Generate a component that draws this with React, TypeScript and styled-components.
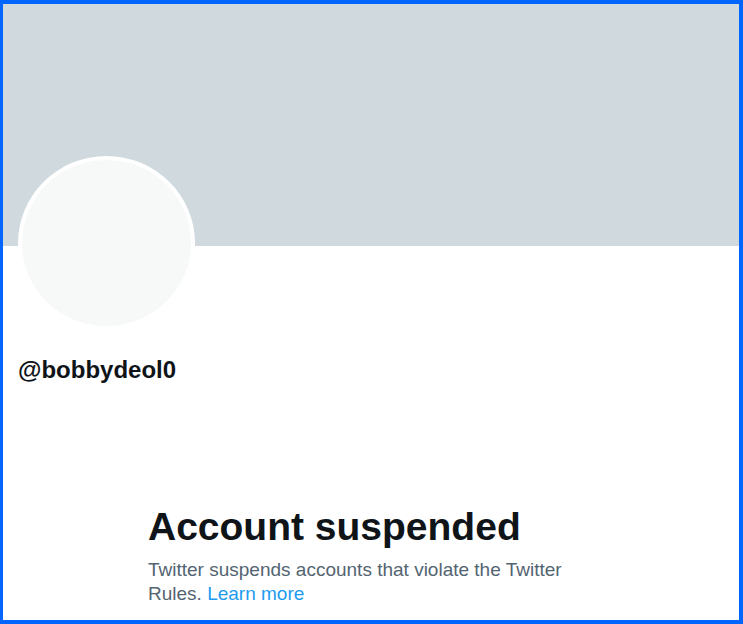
import styled, { createGlobalStyle } from "styled-components"

const Global = createGlobalStyle`
  html, body { margin: 0; padding: 0; background: #ffffff; }
  * { box-sizing: border-box; }
`

const Frame = styled.div`
  width: 743px;
  height: 624px;
  border: 4px solid #0066ff;
  border-left-width: 3px;
  background: #ffffff;
  overflow: hidden;
  font-family: "Liberation Sans", Arial, sans-serif;
  color: #0f1419;
`

const Banner = styled.div`
  height: 242px;
  background: #cfd9de;
`

const Profile = styled.div`
  padding-left: 15px;
`

const Avatar = styled.div`
  width: 177px;
  height: 174px;
  margin-top: -90px;
  border-radius: 50%;
  border: 4px solid #ffffff;
  background: #f7f9f9;
`

const Handle = styled.div`
  margin-top: 26px;
  font-size: 24px;
  font-weight: 700;
  line-height: 28px;
  color: #0f1419;
`

const Message = styled.div`
  margin: 119px 0 0 145px;
  max-width: 440px;
`

const Title = styled.h1`
  margin: 0;
  font-size: 39px;
  line-height: 47px;
  font-weight: 700;
  color: #0f1419;
`

const Text = styled.p`
  margin: 8px 0 0;
  font-size: 19px;
  line-height: 24px;
  color: #536471;
`

const Link = styled.a`
  color: #1d9bf0;
  text-decoration: none;
`

export default function App() {
  return (
    <>
      <Global />
      <Frame>
        <Banner />
        <Profile>
          <Avatar />
          <Handle>@bobbydeol0</Handle>
        </Profile>
        <Message>
          <Title>Account suspended</Title>
          <Text>
            Twitter suspends accounts that violate the Twitter Rules.{" "}
            <Link href="#">Learn more</Link>
          </Text>
        </Message>
      </Frame>
    </>
  )
}
